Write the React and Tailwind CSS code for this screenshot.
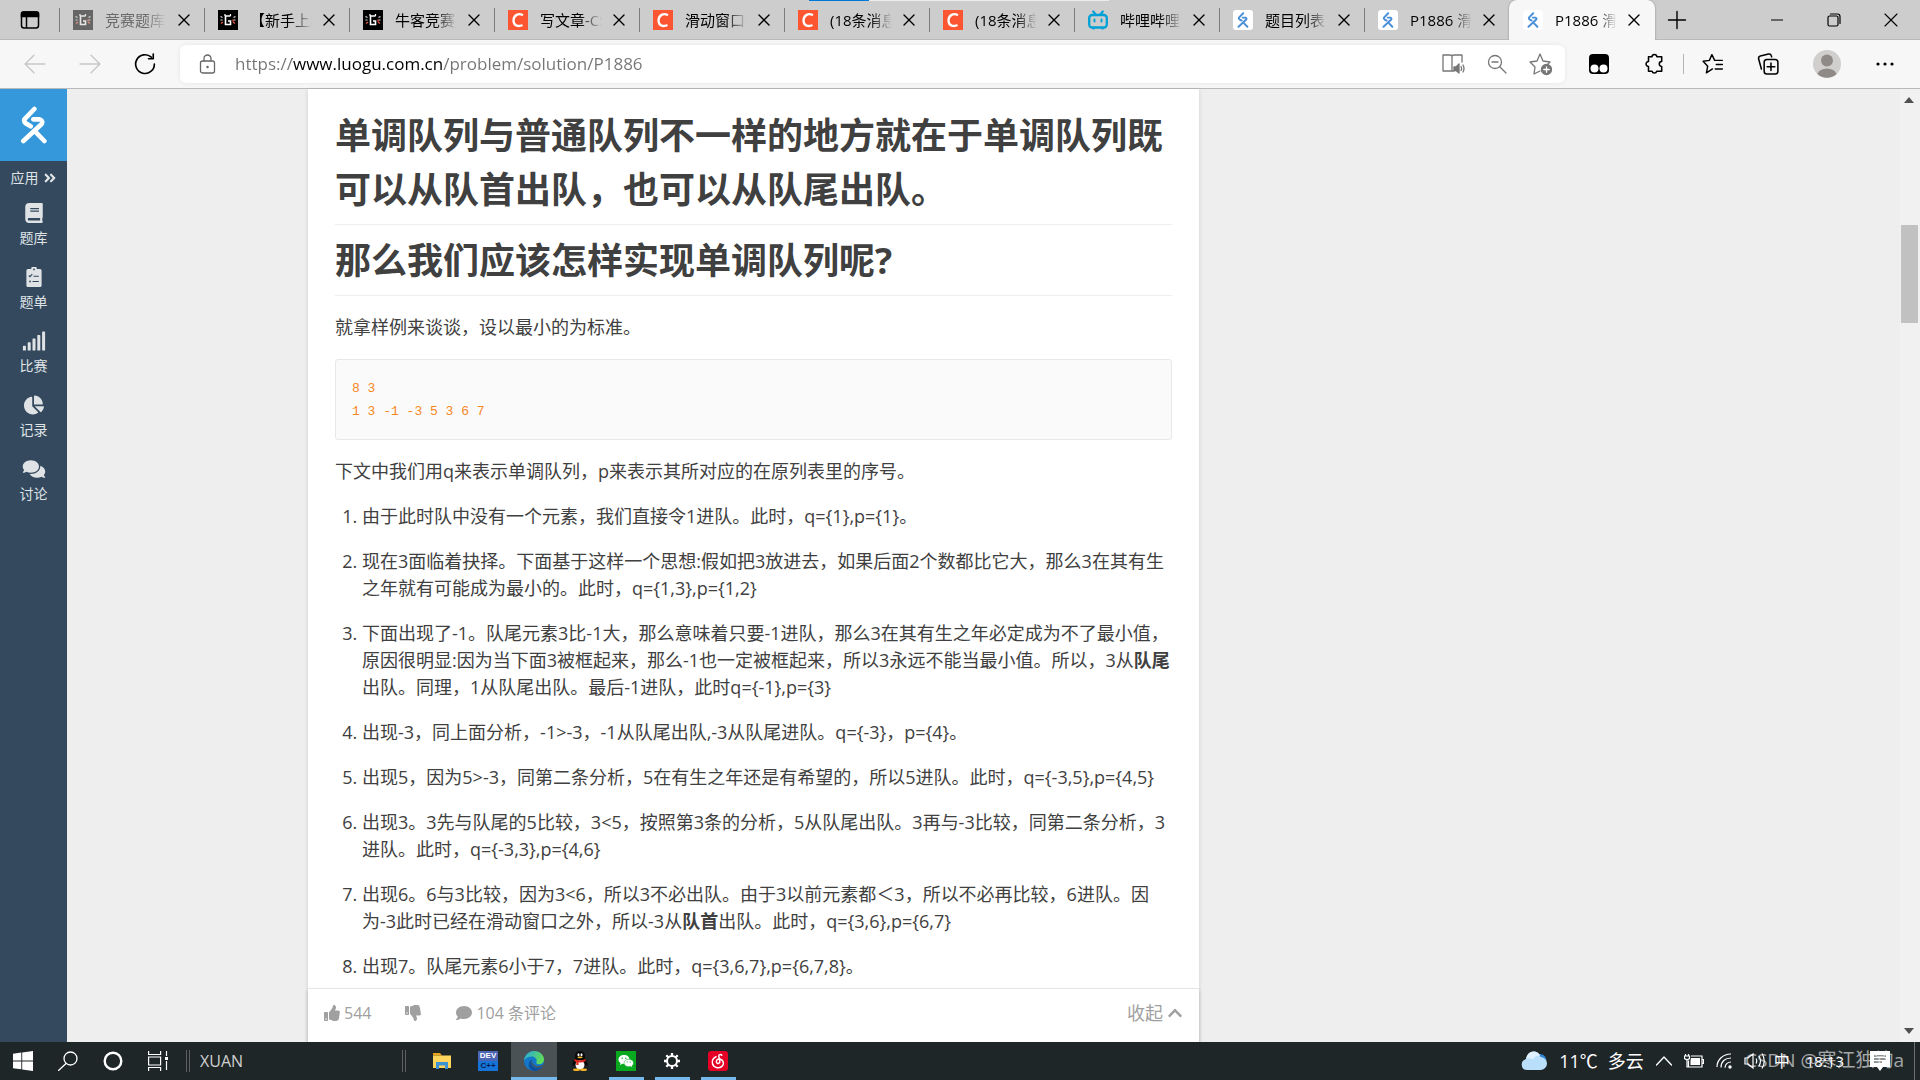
import React, { useState } from "react";
import {
  FaAngleDoubleRight,
  FaBook,
  FaSignal,
  FaChartPie,
  FaComments,
  FaComment,
  FaThumbsUp,
  FaThumbsDown,
  FaChevronUp,
} from "react-icons/fa";

const tabs = [
  { title: "竞赛题库_", icon: "nowcoder", idle: true },
  { title: "【新手上路", icon: "nowcoder" },
  { title: "牛客竞赛_", icon: "nowcoder" },
  { title: "写文章-CSDN", icon: "csdn" },
  { title: "滑动窗口牛", icon: "csdn" },
  { title: "(18条消息)", icon: "csdn" },
  { title: "(18条消息)", icon: "csdn" },
  { title: "哔哩哔哩", icon: "bilibili" },
  { title: "题目列表", icon: "luogu" },
  { title: "P1886 滑动", icon: "luogu" },
  { title: "P1886 滑动", icon: "luogu", active: true },
];

const navItems = [
  { label: "题库", icon: <FaBook className="size-5" /> },
  { label: "题单", icon: <ClipboardIcon /> },
  { label: "比赛", icon: <FaSignal className="h-5 w-6" /> },
  { label: "记录", icon: <FaChartPie className="size-5" /> },
  { label: "讨论", icon: <FaComments className="h-5 w-6" /> },
];

const steps = [
  "由于此时队中没有一个元素，我们直接令1进队。此时，q={1},p={1}。",
  "现在3面临着抉择。下面基于这样一个思想:假如把3放进去，如果后面2个数都比它大，那么3在其有生之年就有可能成为最小的。此时，q={1,3},p={1,2}",
  <>
    下面出现了-1。队尾元素3比-1大，那么意味着只要-1进队，那么3在其有生之年必定成为不了最小值，原因很明显:因为当下面3被框起来，那么-1也一定被框起来，所以3永远不能当最小值。所以，3从
    <strong>队尾</strong>出队。同理，1从队尾出队。最后-1进队，此时q={"{-1}"},p={"{3}"}
  </>,
  "出现-3，同上面分析，-1>-3，-1从队尾出队,-3从队尾进队。q={-3}，p={4}。",
  "出现5，因为5>-3，同第二条分析，5在有生之年还是有希望的，所以5进队。此时，q={-3,5},p={4,5}",
  "出现3。3先与队尾的5比较，3<5，按照第3条的分析，5从队尾出队。3再与-3比较，同第二条分析，3进队。此时，q={-3,3},p={4,6}",
  <>
    出现6。6与3比较，因为3&lt;6，所以3不必出队。由于3以前元素都＜3，所以不必再比较，6进队。因为-3此时已经在滑动窗口之外，所以-3从
    <strong>队首</strong>出队。此时，q={"{3,6}"},p={"{6,7}"}
  </>,
  "出现7。队尾元素6小于7，7进队。此时，q={3,6,7},p={6,7,8}。",
];

// shared wrapper for thin line icons
function Line({ children, className = "size-5", width = 1.3, box = "0 0 20 20" }) {
  return (
    <svg
      viewBox={box}
      className={className}
      fill="none"
      stroke="currentColor"
      strokeWidth={width}
      strokeLinecap="round"
      strokeLinejoin="round"
    >
      {children}
    </svg>
  );
}

function LuoguMark({ className }) {
  return (
    <svg viewBox="60 54 82 114" className={className} fill="none" stroke="currentColor" strokeWidth="14" strokeLinecap="round" strokeLinejoin="round">
      <path d="M102 63 L72 94 Q70 101 76 106 L91 115" />
      <path d="M99 94 L118 94 Q129 98 124 108 L69 159" />
      <path d="M107 133 L132 159" />
    </svg>
  );
}

function ClipboardIcon() {
  return (
    <svg viewBox="0 0 16 20" className="h-5 w-4">
      <path fill="currentColor" d="M2 2h3.200a2.800 2.800 0 0 1 5.600 0H14a1.600 1.600 0 0 1 1.600 1.600v14.800A1.600 1.600 0 0 1 14 20H2a1.600 1.600 0 0 1-1.600-1.600V3.600A1.600 1.600 0 0 1 2 2Z" />
      <circle cx="8" cy="2.400" r="0.900" fill="#34495e" />
      <path fill="none" stroke="#34495e" strokeWidth="1.100" d="M2.800 8.500l1.200 1.200 2.300-2.500M7.500 9.200h5.300M6.500 14.500h6.300" />
      <circle cx="4" cy="14.500" r="0.900" fill="#34495e" />
    </svg>
  );
}

function Favicon({ name, idle }) {
  if (name === "nowcoder") {
    return (
      <svg viewBox="0 0 20 20" className={idle ? "size-5 opacity-50" : "size-5"}>
        <rect width="20" height="20" fill="#000" />
        <path d="M12.500 6H7.500v8.500h5V11H10" fill="none" stroke="#fff" strokeWidth="1.600" />
        <path d="M7 4v2M12.500 4v2" stroke="#fff" strokeWidth="1.200" />
        <path d="M2.500 6.500l2 1M2.500 10h2M17.500 6.500l-2 1M17.500 10h-2" stroke="#ddd" strokeWidth="1.200" />
        <path d="M3 13.500l2-1.500M17 13.500l-2-1.500M15 9.500v2" stroke="#e8553a" strokeWidth="1.300" />
      </svg>
    );
  }
  if (name === "csdn") {
    return (
      <svg viewBox="0 0 20 20" className="size-5">
        <rect width="20" height="20" fill="#fc5531" />
        <path d="M15 5.200C10.500 2.800 5.800 5 5.500 10.200c-.2 5 4.500 7.200 9 4.800" fill="none" stroke="#fff" strokeWidth="2.300" />
      </svg>
    );
  }
  if (name === "bilibili") {
    return (
      <svg viewBox="0 0 20 20" className="size-5" fill="none" stroke="#00a1d6" strokeLinecap="round">
        <rect x="1.200" y="5" width="17.600" height="12.500" rx="3" strokeWidth="2.300" />
        <path d="M5.200 1.500l2.500 3M14.800 1.500l-2.500 3" strokeWidth="2.200" />
        <path d="M6.500 9.500v2M13.500 9.500v2" strokeWidth="2" />
        <path d="M5 18.700h1M14 18.700h1" strokeWidth="1.500" />
      </svg>
    );
  }
  return (
    <span className="flex size-5 items-center justify-center rounded-[3px] bg-white text-[#4a90d9]">
      <LuoguMark className="h-4 w-3" />
    </span>
  );
}

function Tab({ tab }) {
  return (
    <div
      className={
        tab.active
          ? "flex h-full w-[146px] shrink-0 items-center rounded-t-lg bg-[#f7f7f7] pl-[14px] shadow-[0_0_2px_rgba(0,0,0,0.4)]"
          : "flex h-full w-[145px] shrink-0 items-center"
      }
    >
      {!tab.active && <span className="mr-[13px] h-6 w-px shrink-0 bg-[#7c7c7c]" />}
      <button type="button" className="flex min-w-0 items-center gap-3">
        <span className="shrink-0">
          <Favicon name={tab.icon} idle={tab.idle} />
        </span>
        <span
          className={
            tab.idle
              ? "block w-[62px] overflow-hidden text-left text-[15px] leading-6 whitespace-nowrap text-[#6a6a6a] [mask-image:linear-gradient(to_right,black_65%,transparent)]"
              : "block w-[62px] overflow-hidden text-left text-[15px] leading-6 whitespace-nowrap text-black [mask-image:linear-gradient(to_right,black_65%,transparent)]"
          }
        >
          {tab.title}
        </span>
      </button>
      <button type="button" aria-label="关闭标签页" className="ml-[11px] text-black">
        <Line className="size-3" box="0 0 12 12" width={1.4}>
          <path d="M1 1l10 10M11 1L1 11" />
        </Line>
      </button>
    </div>
  );
}

function TabStrip() {
  return (
    <header className="relative flex h-10 shrink-0 items-center overflow-hidden bg-[#cdcdcd] pr-px shadow-[inset_0_-1px_0_#b9b9b9]">
      {/* screen share progress on the top edge */}
      <div className="absolute top-0 left-[809px] flex h-px w-[300px] bg-[#ececec]">
        <span className="w-1/5 bg-[#0078d7]" />
      </div>
      <button type="button" aria-label="标签页操作" className="flex w-[59px] shrink-0 justify-center text-black">
        <svg viewBox="0 0 20 20" className="size-5" fill="none" stroke="currentColor" strokeWidth="1.500">
          <rect x="1.500" y="2" width="17" height="16" rx="2.500" />
          <path d="M1.500 3.500q0-1.500 2-1.500h13q2 0 2 1.500v3h-17z" fill="currentColor" />
          <path d="M6.500 6v12" />
        </svg>
      </button>
      {tabs.map((tab, i) => (
        <Tab key={i} tab={tab} />
      ))}
      <button type="button" aria-label="新建标签页" className="ml-3 text-black">
        <Line width={1.4}>
          <path d="M10 1.500v17M1.500 10h17" />
        </Line>
      </button>
      <div className="ml-auto flex h-full items-center text-black">
        <button type="button" aria-label="最小化" className="flex w-[57px] justify-center">
          <Line className="size-3" box="0 0 12 12" width={1.2}>
            <path d="M0 6h12" />
          </Line>
        </button>
        <button type="button" aria-label="还原" className="flex w-[57px] justify-center">
          <Line className="size-[14px]" box="0 0 14 14" width={1.2}>
            <rect x="1" y="3" width="10" height="10" rx="1.500" />
            <path d="M3.500 1h7Q13 1 13 3.500v7" />
          </Line>
        </button>
        <button type="button" aria-label="关闭" className="flex w-[57px] justify-center">
          <Line className="size-[14px]" box="0 0 14 14" width={1.1}>
            <path d="M1 1l12 12M13 1L1 13" />
          </Line>
        </button>
      </div>
    </header>
  );
}

function Toolbar() {
  const [url, setUrl] = useState("https://www.luogu.com.cn/problem/solution/P1886");

  return (
    <div className="flex h-[49px] shrink-0 items-center border-b border-[#b9b9b9] bg-[#f7f7f7] pr-6 pb-px pl-6">
      <div className="flex items-center gap-[33px]">
        <button type="button" aria-label="后退" disabled className="text-[#c8c8c8]">
          <Line className="size-[22px]">
            <path d="M1 10h18M9 2l-8 8 8 8" />
          </Line>
        </button>
        <button type="button" aria-label="前进" disabled className="text-[#c8c8c8]">
          <Line className="size-[22px]">
            <path d="M1 10h18M11 2l8 8-8 8" />
          </Line>
        </button>
        <button type="button" aria-label="刷新" className="text-black">
          <Line className="size-[22px]" width={1.5}>
            <path d="M18.500 10a8.500 8.500 0 1 1-2.800-6.200M17.500 1v4.200h-4.300" />
          </Line>
        </button>
      </div>

      <form
        className="ml-6 flex h-[38px] flex-1 items-center rounded-md bg-white pr-3 pl-[19px] shadow-[0_0_4px_rgba(0,0,0,0.08)]"
        onSubmit={(e) => e.preventDefault()}
      >
        <Line className="h-5 w-[17px] text-[#666]" box="0 0 17 20">
          <rect x="1.500" y="7" width="14" height="12" rx="2" />
          <path d="M5 7V4.500a3.500 3.500 0 0 1 7 0V7" />
          <circle cx="8.500" cy="13" r="0.600" fill="currentColor" />
        </Line>
        {/* host part of the address is darker than the rest */}
        <input
          type="text"
          aria-label="地址栏"
          value={url}
          onChange={(e) => setUrl(e.target.value)}
          className="ml-[19px] h-full min-w-0 flex-1 bg-[linear-gradient(to_right,#757575_57px,#000_57px,#000_208px,#757575_208px)] bg-clip-text text-[17px] text-transparent outline-none"
        />
        <div className="flex items-center gap-[22px] text-[#767676]">
          <button type="button" aria-label="沉浸式阅读">
            <Line className="h-[22px] w-6" box="0 0 24 22">
              <path d="M11 2.500V18H2V2h7q2 0 2 1.500Q11 2 13 2h8v7M11 18h2" />
              <path d="M13 14v3.500h2l3 2.500v-9l-3 3z" fill="currentColor" />
              <path d="M20 13.500q1.200 2 0 4M22 12q2 3.500 0 7" />
            </Line>
          </button>
          <button type="button" aria-label="缩小">
            <Line>
              <circle cx="8" cy="8" r="6.500" />
              <path d="M5 8h6M12.800 12.800L19 19" />
            </Line>
          </button>
          <button type="button" aria-label="添加到收藏夹">
            <Line className="size-6" box="0 0 24 24">
              <path d="M11 19l-6 3 1-7-5-5 7-1 3-7 3 7 7 1-2.500 2.500" />
              <circle cx="17.500" cy="17.500" r="5" fill="currentColor" />
              <path d="M17.500 14.800v5.400M14.800 17.500h5.400" stroke="#fff" />
            </Line>
          </button>
        </div>
      </form>

      <div className="flex items-center pl-6 text-black">
        <button type="button" aria-label="Tampermonkey">
          <svg viewBox="0 0 20 20" className="size-5">
            <rect width="20" height="20" rx="4" fill="#000" />
            <circle cx="5.500" cy="14.500" r="4" fill="#fff" />
            <circle cx="14.500" cy="14.500" r="4" fill="#fff" />
          </svg>
        </button>
        <button type="button" aria-label="扩展" className="ml-[34px]">
          <Line className="size-[22px]" width={1.4}>
            <path d="M5 3.500h3.200a2.200 2.200 0 0 1 4.400 0H17v4.300a2 2 0 0 0 0 4.400v4.300h-4.500a2.200 2.200 0 0 1-4.300 0H5v-4.300a2.200 2.200 0 1 1 0-4.400z" />
          </Line>
        </button>
        <span className="mx-[18px] h-5 w-px bg-[#b5b5b5]" />
        <button type="button" aria-label="收藏夹">
          <Line className="size-[22px]" width={1.3}>
            <path d="M9.500 14.500L4 18l1.200-6L1 7.500l5.700-.8L9 1.500l2.500 5.200h7M13 10.500h5.500M12 14.500h6.500" />
          </Line>
        </button>
        <button type="button" aria-label="集锦" className="ml-[33px]">
          <Line className="size-[22px]" width={1.4}>
            <rect x="6.500" y="6" width="12.500" height="13" rx="2.500" />
            <path d="M12.700 9v7M9.200 12.500h7M4 14.500l-2.500-9Q1 3.300 3 2.800L10.500 1q2-.4 2.500 1.500l.3 1" />
          </Line>
        </button>
        <button type="button" aria-label="个人资料" className="ml-[34px]">
          <svg viewBox="0 0 28 28" className="size-7">
            <circle cx="14" cy="14" r="14" fill="#d1cfcd" />
            <circle cx="14" cy="10.500" r="6" fill="#8f8a87" />
            <path d="M4.500 24a9.700 7 0 0 1 19 0A14 14 0 0 1 4.500 24z" fill="#8f8a87" />
          </svg>
        </button>
        <button type="button" aria-label="设置及其他" className="ml-[33px]">
          <svg viewBox="0 0 22 20" className="h-5 w-[22px]">
            <circle cx="4" cy="10" r="1.600" />
            <circle cx="11" cy="10" r="1.600" />
            <circle cx="18" cy="10" r="1.600" />
          </svg>
        </button>
      </div>
    </div>
  );
}

function Sidebar() {
  return (
    <nav className="flex w-[67px] shrink-0 flex-col items-center bg-[#34495e] text-[14px] text-[#dfe3e6]">
      <a href="#home" aria-label="洛谷" className="flex h-[72px] w-full items-center justify-center bg-[#3498db] text-white">
        <LuoguMark className="h-[38px] w-7" />
      </a>
      <a href="#apps" className="flex h-[34px] items-center gap-1 leading-5">
        应用
        <FaAngleDoubleRight className="size-[14px]" />
      </a>
      {navItems.map((item) => (
        <a key={item.label} href="#nav" className="flex h-16 flex-col items-center gap-[5px] pt-2 leading-5">
          {item.icon}
          {item.label}
        </a>
      ))}
    </nav>
  );
}

function Article() {
  return (
    <article className="flex min-h-0 flex-col bg-white text-[#404040] shadow-[0_1px_4px_rgba(26,26,26,0.15)]">
      <div className="min-h-0 flex-1 overflow-hidden px-[27px] pt-5 text-[18px] leading-[27px]">
        <h1 className="mb-[9px] border-b border-[#eee] pb-[7px] text-[36px] leading-[54px] font-bold">
          单调队列与普通队列不一样的地方就在于单调队列既可以从队首出队，也可以从队尾出队。
        </h1>
        <h1 className="mb-[18px] border-b border-[#eee] pb-[7px] text-[36px] leading-[54px] font-bold">
          那么我们应该怎样实现单调队列呢?
        </h1>
        <p>就拿样例来谈谈，设以最小的为标准。</p>
        <pre className="my-[18px] rounded-[3px] border border-[#e8e8e8] bg-[#fafafa] px-4 pt-[17px] pb-4 font-['Liberation_Mono',monospace] text-[13px] leading-[23px] text-[#f5871f]">
          {"8 3\n1 3 -1 -3 5 3 6 7"}
        </pre>
        <p>下文中我们用q来表示单调队列，p来表示其所对应的在原列表里的序号。</p>
        <ol className="mt-[18px] flex list-decimal flex-col gap-[18px] pl-[27px]">
          {steps.map((step, i) => (
            <li key={i}>{step}</li>
          ))}
        </ol>
      </div>
      <footer className="flex h-[54px] shrink-0 items-center border-t border-[#e5e5e5] px-4 pb-[6px] text-[16px] leading-6 text-[#a0a0a0] shadow-[0_3px_4px_rgba(26,26,26,0.2)]">
        <button type="button" className="flex items-center gap-1">
          <FaThumbsUp className="size-4" />
          544
        </button>
        <button type="button" aria-label="反对" className="ml-[34px]">
          <FaThumbsDown className="size-4" />
        </button>
        <button type="button" className="ml-[35px] flex items-center gap-1">
          <FaComment className="size-4" />
          104 条评论
        </button>
        <button type="button" className="ml-auto flex items-center gap-1 text-[18px]">
          收起
          <FaChevronUp className="size-4" />
        </button>
      </footer>
    </article>
  );
}

function Scrollbar() {
  return (
    <div className="flex w-5 shrink-0 flex-col items-center bg-[#f1f1f1] py-2 pr-[2px]" aria-hidden="true">
      <svg viewBox="0 0 10 6" className="h-[6px] w-[10px]">
        <path d="M0 6l5-6 5 6z" fill="#505050" />
      </svg>
      <div className="mt-[122px] h-[98px] w-[17px] bg-[#c1c1c1]" />
      <svg viewBox="0 0 10 6" className="mt-auto h-[6px] w-[10px]">
        <path d="M0 0l5 6 5-6z" fill="#505050" />
      </svg>
    </div>
  );
}

function TaskButton({ label, children, active, running }) {
  return (
    <button
      type="button"
      aria-label={label}
      className={
        active
          ? "flex h-full w-full items-center justify-center border-b-3 border-[#76b9ed] bg-[#4b5255] pt-[3px]"
          : "flex h-full w-full flex-col items-center justify-between pt-[9px]"
      }
    >
      {children}
      {running && <span className="h-[3px] w-[35px] bg-[#76b9ed]" />}
    </button>
  );
}

function Taskbar() {
  return (
    <footer className="relative flex h-[38px] shrink-0 items-center bg-[#1f2628] text-white">
      <div className="grid h-full w-[180px] grid-cols-4">
        <TaskButton label="开始">
          <svg viewBox="0 0 20 20" className="size-5" fill="#fff">
            <path d="M0 2.800l8.300-1.200v7.900H0zM9.200 1.500L20 0v9.500H9.200zM0 10.400h8.300v7.900L0 17.200zM9.200 10.400H20V20L9.200 18.500z" />
          </svg>
        </TaskButton>
        <TaskButton label="搜索">
          <Line>
            <circle cx="12.500" cy="7.500" r="6.500" />
            <path d="M8 12.500L0.500 19.500" />
          </Line>
        </TaskButton>
        <TaskButton label="Cortana">
          <svg viewBox="0 0 20 20" className="size-5" fill="none" stroke="#fff" strokeWidth="2.400">
            <circle cx="10" cy="10" r="8.300" />
          </svg>
        </TaskButton>
        <TaskButton label="任务视图">
          <svg viewBox="0 0 20 20" className="size-5" fill="none" stroke="#fff" strokeWidth="1.200">
            <path d="M0.600 0v3.500h12V0M0.600 20v-3.500h12V20M0.600 6h12v8H0.600zM18.500 0v5M18.500 10v9" />
            <path d="M17 6h3v3h-3z" fill="#fff" stroke="none" />
          </svg>
        </TaskButton>
      </div>
      <span className="ml-[6px] h-[22px] w-1 border-x border-[#5a6062]" />
      <span className="ml-[10px] w-[202px] text-[16px] leading-6 text-[#d0d0d0]">XUAN</span>
      <span className="h-[22px] w-1 border-x border-[#5a6062]" />
      <div className="ml-[13px] grid h-full w-[322px] grid-cols-7">
        <TaskButton label="文件资源管理器">
          <svg viewBox="0 0 20 20" className="size-5">
            <path d="M1 2h7l2 2.500H1z" fill="#e8a317" />
            <path d="M1 4.500h18V17H1z" fill="#ffd45c" />
            <path d="M4 18v-7h12v7h-3v-3.500H7V18z" fill="#3d92d6" />
          </svg>
        </TaskButton>
        <TaskButton label="Dev-C++">
          <span className="flex size-5 flex-col bg-[#1673d8] text-center font-['Liberation_Sans',sans-serif] text-[8px] leading-[10px] font-bold">
            <span className="bg-[#4b66b4]">DEV</span>
            <span className="text-[#06204f]">C++</span>
          </span>
        </TaskButton>
        <TaskButton label="Microsoft Edge" active>
          <svg viewBox="0 0 20 20" className="size-5">
            <defs>
              <linearGradient id="edgeTop" x1="0" y1="0" x2="1" y2="0.400">
                <stop offset="0" stopColor="#2aa6e0" />
                <stop offset="1" stopColor="#5fdc5a" />
              </linearGradient>
            </defs>
            <circle cx="10" cy="10" r="10" fill="#1577c9" />
            <path d="M0 9.500C.5 4 5 0 10.200 0 16 0 20 4.200 20 8.500c0 3-2.200 4.700-4.800 4.700-2.200 0-3.600-.9-2.700-2.200C13.500 8 11 5.500 7.500 5.500 3.500 5.500 1 7.800 0 9.500z" fill="url(#edgeTop)" />
            <path d="M8 8.500c-2.500 4 1 9 6 8.500 2 0 3.800-1.200 4.800-2-1.600 3-4.800 5-8.800 5-3.500-1-5.500-3.500-5.200-6.500C5 11 6.200 9 8 8.500z" fill="#0f4f9e" />
            <path d="M8.500 8.500c-1 3 1 6.500 5 6.700 2.300.1 4-.6 5.400-1.700l.4.800c-1.500 1.800-3.800 2.500-5.800 2.400-4.800-.2-7.500-4.800-5-8.200z" fill="#4b5255" />
          </svg>
        </TaskButton>
        <TaskButton label="QQ">
          <svg viewBox="0 0 20 20" className="size-5">
            <path d="M10 0c-3.500 0-5 2.500-5 5.500v2C3 10 1.500 13 2.500 15c.6 0 1.200-.8 1.500-1.200.5 2.200 2.500 4.700 6 4.700s5.500-2.500 6-4.700c.3.400.9 1.200 1.500 1.200 1-2-.5-5-2.500-7.500v-2C15 2.500 13.500 0 10 0z" fill="#0a0a0a" />
            <ellipse cx="10" cy="14" rx="4.500" ry="4.500" fill="#fff" />
            <ellipse cx="6.500" cy="18.700" rx="3.500" ry="1.300" fill="#f5b324" />
            <ellipse cx="13.500" cy="18.700" rx="3.500" ry="1.300" fill="#f5b324" />
            <path d="M4.500 8q5.500 2.800 11 0v2.300q-3.500 1.500-7 1.200V14H6.300v-3l-1.800-.7z" fill="#e0261b" />
            <ellipse cx="8.500" cy="3.700" rx="1" ry="1.500" fill="#fff" />
            <ellipse cx="11.500" cy="3.700" rx="1" ry="1.500" fill="#fff" />
            <ellipse cx="10" cy="6.400" rx="2.700" ry="0.800" fill="#f5b324" />
          </svg>
        </TaskButton>
        <TaskButton label="微信" running>
          <svg viewBox="0 0 20 20" className="size-5">
            <rect width="20" height="20" fill="#09a91f" />
            <path d="M8 4c3.200 0 5.500 2 5.500 4.500S11.200 13 8 13l-1.500-.2L4 14l.6-2C3.200 11.200 2.500 10 2.500 8.500 2.500 6 4.800 4 8 4z" fill="#fff" />
            <path d="M12.700 8.200c2.600 0 4.800 1.600 4.800 3.800 0 1.200-.6 2.200-1.600 2.900l.4 1.600-1.900-1c-3.500.7-6.400-1-6.400-3.500 0-2.200 2.200-3.800 4.700-3.800z" fill="#fff" stroke="#09a91f" strokeWidth="0.500" />
            <g fill="#09a91f">
              <circle cx="6.200" cy="7.300" r="0.700" />
              <circle cx="9.800" cy="7.300" r="0.700" />
              <circle cx="11.200" cy="11" r="0.600" />
              <circle cx="14.200" cy="11" r="0.600" />
            </g>
          </svg>
        </TaskButton>
        <TaskButton label="设置" running>
          <svg viewBox="0 0 20 20" className="size-5" fill="none" stroke="#fff">
            <circle cx="10" cy="10" r="5" strokeWidth="2" />
            <path d="M10 2v3M10 15v3M2 10h3M15 10h3M4.300 4.300l2.200 2.200M13.500 13.500l2.200 2.200M15.700 4.300l-2.200 2.200M6.500 13.500l-2.200 2.200" strokeWidth="2.300" />
          </svg>
        </TaskButton>
        <TaskButton label="网易云音乐" running>
          <svg viewBox="0 0 20 20" className="size-5">
            <rect width="20" height="20" rx="3" fill="#e60026" />
            <path d="M13.800 4.200c-1-1.200-3.200-.7-3 1l1 5c.3 2.700-3.300 3-3.400.5C8.300 8.500 10.300 7.600 12 8c3.500 1 4.200 4.500 2.500 6.800-2.600 3.300-8.700 2.400-10-2C3.500 9.500 5.500 6.700 8 5.800" fill="none" stroke="#fff" strokeWidth="1.500" strokeLinecap="round" />
          </svg>
        </TaskButton>
      </div>

      <div className="ml-auto flex h-full items-center">
        <svg viewBox="0 0 26 20" className="h-5 w-[26px]">
          <path d="M18 3c4 0 7 2 7.500 6.500L20 12z" fill="#2f83d4" />
          <path d="M6 19a5.500 5.500 0 0 1-.8-10.900C5.500 3.500 9 .5 12.500.5c3.600 0 6.300 2.300 7 5.500A6.500 6.500 0 0 1 19.500 19z" fill="#b9dffa" />
          <path d="M5.200 8.100C5.500 3.500 9 .5 12.500.5c3 0 5.300 1.500 6.500 4-4 0-6 2-7 4-2-1.500-4.500-1.500-6.800-.4z" fill="#dff1ff" />
        </svg>
        <span className="ml-3 flex gap-[10px] text-[18px] leading-6">
          <span>11℃</span>
          <span>多云</span>
        </span>
        <button type="button" aria-label="显示隐藏的图标" className="ml-3">
          <Line className="h-5 w-4" box="0 0 16 20">
            <path d="M0.500 14L8 6l7.500 8" />
          </Line>
        </button>
        <svg viewBox="0 0 20 20" className="ml-3 size-5" fill="none" stroke="#fff" strokeWidth="1.200">
          <path d="M4.500 9.500v6.500h13.500V5H7M18 8.500h1.500v4H18M0.500 5h5v2.500q-2.500 2.500-5 0zM1.500 5V3M4.500 5V3M3 9v7h2" />
          <path d="M7 7h9v7H6.500V9.500z" fill="#fff" stroke="none" />
        </svg>
        <svg viewBox="0 0 18 20" className="ml-3 h-5 w-[18px]" fill="none" stroke="#fff" strokeWidth="1.200">
          <path d="M1 16C1 8.500 7 3 15 3M5 16.500C5 10.500 9 7 15 7M9 16.800c0-3.500 2.500-5.800 6-5.800" />
          <circle cx="14" cy="16" r="1.700" fill="#fff" stroke="none" />
        </svg>
        <svg viewBox="0 0 22 20" className="ml-[10px] h-5 w-[22px]" fill="none" stroke="#fff" strokeWidth="1.200">
          <path d="M1 7v6h3l5 4V3L4 7zM12 7.500q1.500 2.500 0 5M15 5q3 5 0 10M18 2.500q4.500 7.500 0 15" />
        </svg>
        <span className="ml-2 text-[16px] leading-6">中</span>
        <time className="ml-4 text-[15px] leading-6">18:13</time>
        <button type="button" aria-label="通知" className="ml-[26px]">
          <svg viewBox="0 0 20 20" className="size-5">
            <path d="M0 0h20v16h-7l-3 4-3-4H0z" fill="#fff" />
            <path d="M4 5h12M4 8h12M4 11h8" stroke="#1f2628" strokeWidth="1.200" />
          </svg>
        </button>
        <span className="mr-[5px] ml-6 h-full w-px bg-[#6a6f71]" />
      </div>
      <span className="absolute top-[6px] right-4 text-[19px] leading-6 whitespace-nowrap text-white/60">CSDN @寒江独钓a</span>
    </footer>
  );
}

export default function App() {
  return (
    <div className="flex h-screen flex-col overflow-hidden font-['Open_Sans','Noto_Sans_CJK_SC',sans-serif]">
      <TabStrip />
      <Toolbar />
      <div className="flex min-h-0 flex-1">
        <Sidebar />
        <main className="flex min-w-0 flex-1 justify-center bg-[#eee]">
          <div className="grid w-full max-w-[1351px] grid-cols-[891fr_460fr] grid-rows-[minmax(0,1fr)]">
            <Article />
          </div>
        </main>
        <Scrollbar />
      </div>
      <Taskbar />
    </div>
  );
}
